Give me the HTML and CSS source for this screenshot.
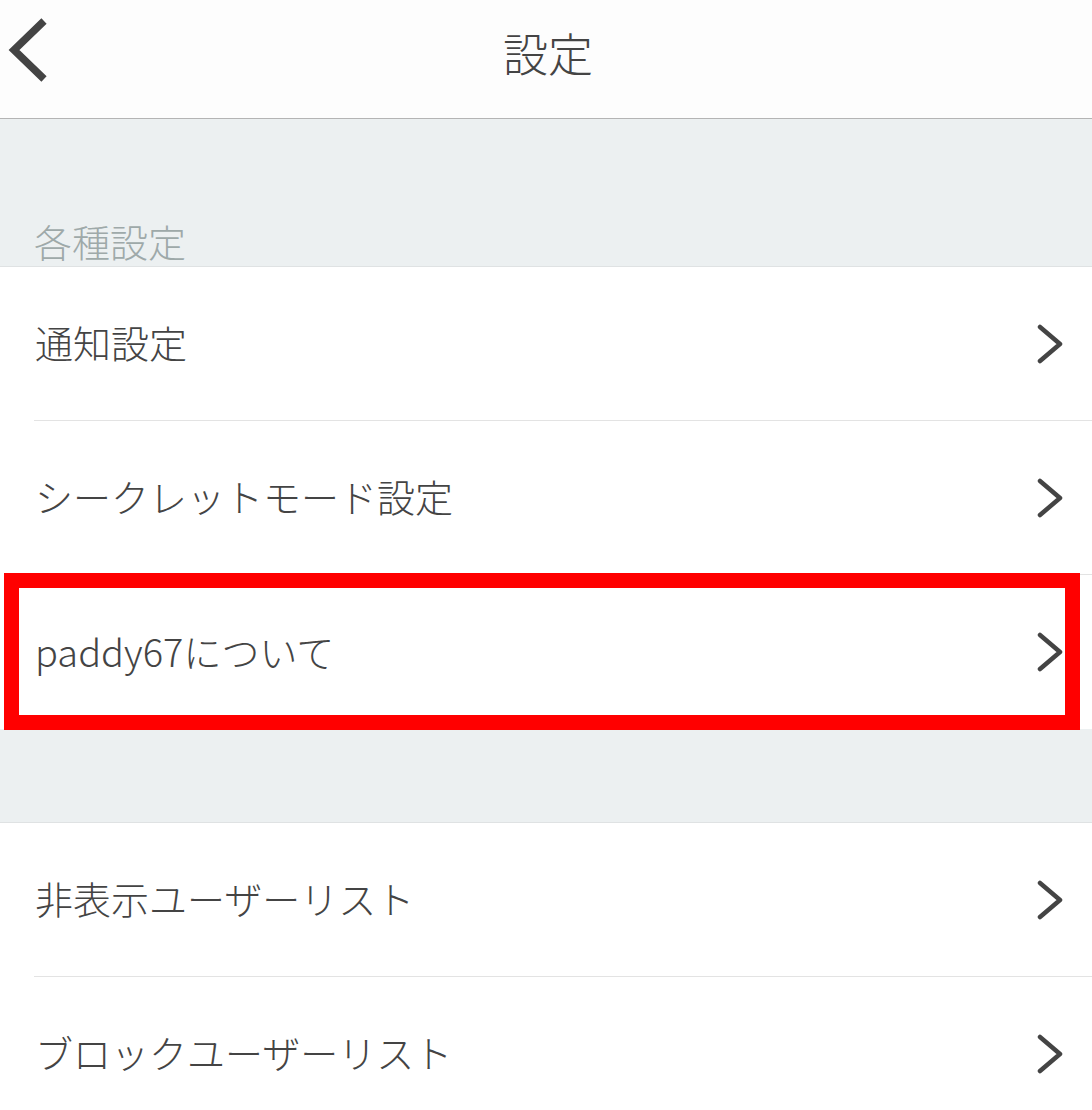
FILE: index.html
```html
<!DOCTYPE html>
<html lang="ja">
<head>
<meta charset="utf-8">
<link rel="stylesheet" href="styles.css">
</head>
<body>
<div class="page">
  <header class="topbar">
    <svg class="back" width="48" height="100" viewBox="0 0 48 100"><polyline points="44,21 14,50 44,79" fill="none" stroke="#444" stroke-width="7.5" stroke-linejoin="miter" stroke-linecap="butt"/></svg>
    <h1 class="title">設定</h1>
  </header>
  <section class="group-head">
    <span class="group-label">各種設定</span>
  </section>
  <ul class="list">
    <li class="row"><span class="row-text">通知設定</span><svg class="chev" width="30" height="40" viewBox="0 0 30 40"><polyline points="6,3 26,20 6,37" fill="none" stroke="#444" stroke-width="4.5" stroke-linecap="round" stroke-linejoin="round"/></svg></li>
    <li class="row"><span class="row-text">シークレットモード設定</span><svg class="chev" width="30" height="40" viewBox="0 0 30 40"><polyline points="6,3 26,20 6,37" fill="none" stroke="#444" stroke-width="4.5" stroke-linecap="round" stroke-linejoin="round"/></svg></li>
    <li class="row row-last highlight"><span class="row-text">paddy67について</span><svg class="chev" width="30" height="40" viewBox="0 0 30 40"><polyline points="6,3 26,20 6,37" fill="none" stroke="#444" stroke-width="4.5" stroke-linecap="round" stroke-linejoin="round"/></svg><span class="redbox"></span></li>
  </ul>
  <section class="group-gap"></section>
  <ul class="list">
    <li class="row"><span class="row-text">非表示ユーザーリスト</span><svg class="chev" width="30" height="40" viewBox="0 0 30 40"><polyline points="6,3 26,20 6,37" fill="none" stroke="#444" stroke-width="4.5" stroke-linecap="round" stroke-linejoin="round"/></svg></li>
    <li class="row"><span class="row-text">ブロックユーザーリスト</span><svg class="chev" width="30" height="40" viewBox="0 0 30 40"><polyline points="6,3 26,20 6,37" fill="none" stroke="#444" stroke-width="4.5" stroke-linecap="round" stroke-linejoin="round"/></svg></li>
  </ul>
</div>
</body>
</html>
```
FILE: styles.css
```css
html, body {
  margin: 0;
  padding: 0;
  background: #ffffff;
}
body {
  font-family: "Noto Sans CJK JP", "Noto Sans", sans-serif;
  color: #444444;
  overflow: hidden;
}
.page {
  width: 1092px;
  height: 1110px;
  overflow: hidden;
}
.topbar {
  height: 118px;
  border-bottom: 1px solid #b4b4b4;
  background: #fdfdfd;
  display: flex;
  align-items: center;
  justify-content: center;
  position: relative;
}
.back {
  position: absolute;
  left: 0;
  top: 0;
}
.title {
  margin: 0;
  font-size: 45px;
  font-weight: 300;
  color: #444444;
  line-height: 1;
  margin-top: -14px;
  margin-left: 4px;
}
.group-head {
  height: 148px;
  background: #ecf0f1;
  display: flex;
  align-items: flex-end;
  padding: 0 0 0 34px;
  box-sizing: border-box;
  border-bottom: 1px solid #dfe2e3;
}
.group-label {
  font-size: 38px;
  font-weight: 300;
  line-height: 1;
  color: #9ea9a9;
  margin-bottom: 6px;
}
.list {
  list-style: none;
  margin: 0;
  padding: 0 0 0 34px;
  background: #ffffff;
}
.row {
  height: 153px;
  display: flex;
  align-items: center;
  justify-content: space-between;
  padding-right: 28px;
  border-bottom: 1px solid #e3e3e3;
  position: relative;
}
.row-last {
  height: 154px;
  border-bottom: none;
}
.row-text {
  font-size: 38px;
  font-weight: 300;
  line-height: 1;
  color: #444444;
  padding-left: 1px;
  margin-top: -3px;
}
.chev {
  display: block;
}
.redbox {
  position: absolute;
  left: -30px;
  top: -2px;
  width: 1076px;
  height: 157px;
  border: 15px solid #ff0000;
  box-sizing: border-box;
  pointer-events: none;
}
.group-gap {
  height: 93px;
  background: #ecf0f1;
  border-bottom: 1px solid #dfe2e3;
}
```
